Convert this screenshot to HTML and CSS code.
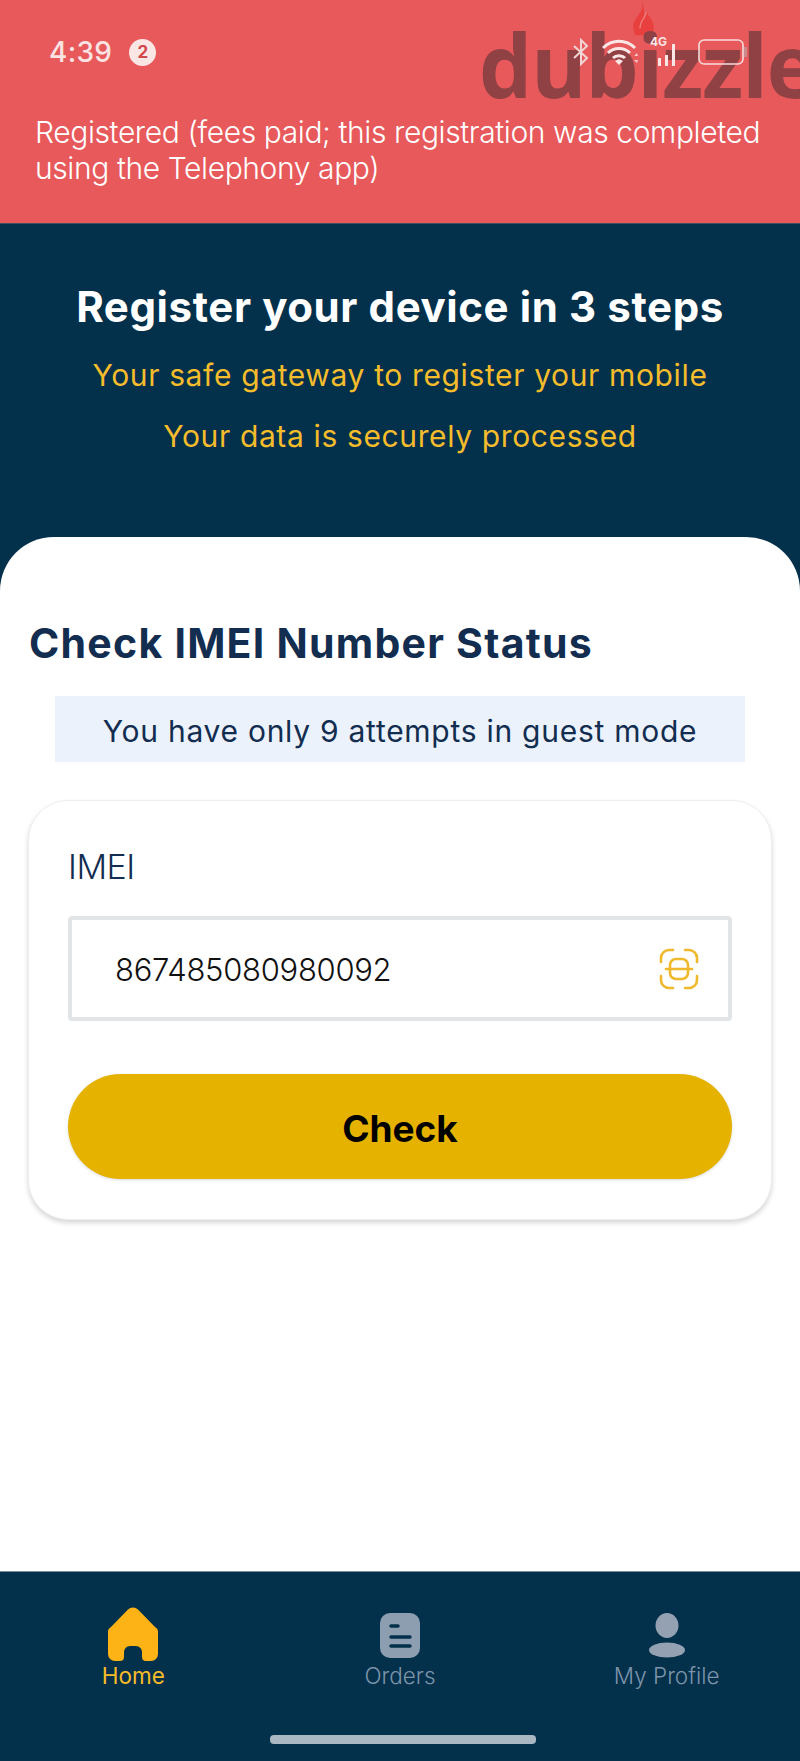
FILE: index.html
```html
<!DOCTYPE html>
<html lang="en">
<head>
<meta charset="utf-8">
<title>Register your device</title>
<link rel="stylesheet" href="styles.css">
</head>
<body>
<div class="phone">
  <section class="alert">
    <div class="watermark">
      <svg class="flame" viewBox="0 0 40 50" width="32" height="42" preserveAspectRatio="none"><path d="M22 0c3 10-1 14-7 22-5 6-4 13-1 20h20c6-9 3-14 0-19-3-5-4-3-5-9-3 6-2 8-4 9 1-8 0-15-3-23z" fill="#e8403f"/><path d="M28 14c-1 7-8 10-8 20" fill="none" stroke="#ef7f7c" stroke-width="1.5"/></svg>
      <span class="wordmark">dubizzle</span>
    </div>
    <div class="status">
      <span class="time">4:39</span>
      <span class="badge">2</span>
      <span class="status-icons">
        <svg class="ic-bt" viewBox="0 0 18 28" width="18" height="28"><path d="M2 8l13 12-6 6V2l6 6L2 20" fill="none" stroke="#f3d5d5" stroke-width="2"/></svg>
        <svg class="ic-wifi" viewBox="0 0 36 28" width="36" height="28"><path d="M1 10c9-9 23-9 32 0M6 15c6-6 16-6 22 0M11 20c3-3 9-3 12 0" fill="none" stroke="#fbe6e6" stroke-width="3"/><path d="M17 21l-4 2 4 4 4-4z" fill="#fbe6e6"/><path d="M32 18l3-3 1 3zM32 22l3 3 1-3z" fill="#f3c9c9"/></svg>
        <span class="net"><span class="net-label">4G</span><svg viewBox="0 0 22 24" width="22" height="24"><path d="M1 15h3v8H1zM8 12h3v11H8zM15 1h3v22h-3z" fill="#fbe6e6"/></svg></span>
        <svg class="ic-batt" viewBox="0 0 50 26" width="50" height="26"><rect x="1" y="1" width="44" height="24" rx="5" fill="none" stroke="#f7dcdc" stroke-width="1.6"/><rect x="46" y="8" width="3" height="10" fill="#c98b8b"/></svg>
      </span>
    </div>
    <p class="alert-text">Registered (fees paid; this registration was completed using the Telephony app)</p>
  </section>

  <header class="hero">
    <h1>Register your device in 3 steps</h1>
    <p>Your safe gateway to register your mobile</p>
    <p>Your data is securely processed</p>
  </header>

  <main class="sheet">
    <h2>Check IMEI Number Status</h2>
    <div class="notice">You have only 9 attempts in guest mode</div>
    <form class="card">
      <div class="label">IMEI</div>
      <div class="field">
        <span class="value">867485080980092</span>
        <svg viewBox="0 0 42 42" width="42" height="42" fill="none" stroke="#f0b92d" stroke-width="2.6" stroke-linecap="round"><path d="M3 14V10a8 8 0 0 1 8-8h4M27 2h4a8 8 0 0 1 8 8v4M39 28v4a8 8 0 0 1-8 8h-4M15 40h-4a8 8 0 0 1-8-8v-4"/><rect x="12" y="11" width="18" height="20" rx="6"/><path d="M8 21h26"/></svg>
      </div>
      <div class="button">Check</div>
    </form>
  </main>

  <nav class="tabs">
    <div class="tab-row">
      <div class="tab active">
        <svg viewBox="0 0 52 54" width="52" height="54"><path d="M21 2.500a7 7 0 0 1 10 0L48 20a6 6 0 0 1 3 6v21a7 7 0 0 1-7 7h-5a4 4 0 0 1-4-4V45a6 6 0 0 0-6-6h-6a6 6 0 0 0-6 6v5a4 4 0 0 1-4 4H8a7 7 0 0 1-7-7V26a6 6 0 0 1 3-6z" fill="#fdb315"/></svg>
        <span>Home</span>
      </div>
      <div class="tab">
        <svg viewBox="0 0 40 45" width="40" height="45"><rect width="40" height="45" rx="10" fill="#8e9eb1"/><path d="M11 13h7M11 24h19M11 33h19" stroke="#03304a" stroke-width="3.500" stroke-linecap="round"/></svg>
        <span>Orders</span>
      </div>
      <div class="tab">
        <svg viewBox="0 0 40 45" width="40" height="45"><ellipse cx="20" cy="12.500" rx="11.500" ry="12.500" fill="#93a1b3"/><ellipse cx="20" cy="37" rx="18" ry="7.500" fill="#93a1b3"/></svg>
        <span>My Profile</span>
      </div>
    </div>
    <div class="home-bar"></div>
  </nav>
</div>
</body>
</html>
```

FILE: styles.css
```css
* { box-sizing: border-box; }
html, body { margin: 0; padding: 0; }
body { font-family: Inter, "Liberation Sans", sans-serif; background: #fff; }
.phone { width: 800px; height: 1761px; display: flex; flex-direction: column; overflow: hidden; background: #03304a; }

.alert { position: relative; height: 224px; background: #e7595b; padding: 34px 30px 0 35px; color: #fff; border-bottom: 1px solid #3d4f5e; overflow: hidden; }
.watermark { position: absolute; left: 479px; top: 0; width: 340px; height: 110px; }
.wordmark { position: absolute; left: 0; top: 4px; font: 700 87px/120px "Open Sans", sans-serif; color: #8f4144; letter-spacing: -1px; transform: scaleX(.965); transform-origin: left; white-space: nowrap; }
.flame { position: absolute; left: 145px; top: 0; }
.status { position: relative; display: flex; align-items: center; height: 36px; padding-left: 14px; }
.time { font-size: 28px; font-weight: 500; color: #fbe3e3; letter-spacing: .3px; }
.badge { margin-left: 17px; width: 27px; height: 27px; border-radius: 50%; background: #fbe6e6; color: #d2474c; font-size: 17px; font-weight: 700; display: flex; align-items: center; justify-content: center; }
.status-icons { margin-left: auto; margin-right: 22px; display: flex; align-items: center; gap: 12px; }
.net { position: relative; display: block; width: 30px; height: 30px; }
.net svg { position: absolute; left: 7px; top: 6px; }
.net-label { position: absolute; left: 0; top: -3px; font-size: 12px; font-weight: 700; color: #fbe6e6; }
.ic-batt { margin-left: 6px; }
.alert-text { position: relative; margin: 44px 0 0; font-size: 30px; line-height: 36px; font-weight: 300; letter-spacing: -.4px; }

.hero { height: 313px; background: #03304a; text-align: center; padding-top: 60px; }
.hero h1 { margin: 0 0 27px; font-size: 42px; line-height: 46px; font-weight: 700; color: #fff; letter-spacing: .6px; }
.hero p { margin: 0 0 25px; font-size: 30px; line-height: 36px; color: #f5bc2c; font-weight: 400; letter-spacing: .63px; }

.sheet { flex: 1; background: #fff; border-radius: 54px 54px 0 0; padding: 81px 28px 0; }
.sheet h2 { margin: 0 0 28px; font-size: 41px; line-height: 50px; font-weight: 700; color: #122d4f; padding-left: 1px; letter-spacing: 1.25px; }
.notice { margin: 0 27px; height: 66px; background: #ebf2fc; color: #122d4f; font-size: 30px; line-height: 70px; text-align: center; letter-spacing: .73px; white-space: nowrap; }
.card { margin-top: 38px; height: 420px; border-radius: 40px; border: 1px solid #eceeef; background: #fff; padding: 40px 39px 0; box-shadow: 0 3px 5px rgba(0,0,0,.16); }
.label { font-size: 34px; line-height: 52px; font-weight: 300; color: #122d4f; letter-spacing: -.5px; }
.field { margin-top: 23px; height: 105px; border: 4px solid #e1e5e8; border-radius: 4px; display: flex; align-items: center; justify-content: space-between; padding: 0 28px 0 43px; }
.value { font-size: 31px; font-weight: 300; color: #111; letter-spacing: -.3px; padding-top: 2px; }
.button { margin-top: 53px; height: 105px; border-radius: 53px; background: #e6b200; color: #000; font-size: 37px; font-weight: 700; line-height: 109px; text-align: center; box-shadow: 0 1px 3px rgba(0,0,0,.15); }

.tabs { height: 190px; background: #03304a; border-top: 1px solid #7b8e9b; padding-top: 35px; }
.tab-row { display: grid; grid-template-columns: repeat(3, 1fr); }
.tab { height: 96px; display: flex; flex-direction: column; align-items: center; color: #7d94aa; font-size: 22.500px; font-weight: 300; }
.tab svg { flex: none; margin-top: 6px; }
.tab span { margin-top: 4px; line-height: 28px; white-space: nowrap; }
.tab.active { color: #f7bb2a; font-weight: 400; }
.tab.active svg { margin-top: 0; }
.tab.active span { margin-top: 1px; }
.home-bar { width: 266px; height: 9px; border-radius: 4px; background: #a9b8c2; margin: 32px 0 0 270px; }
```
